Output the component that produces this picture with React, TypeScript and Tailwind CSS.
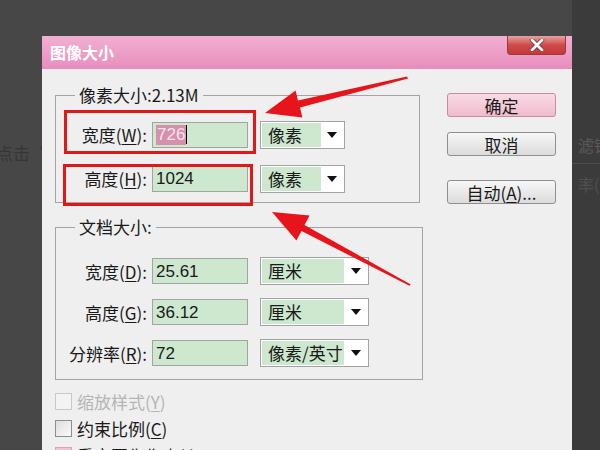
import React from "react";

const CJK = { fontFamily: '"Noto Sans CJK SC", "Noto Sans", sans-serif' };
const LAT = { fontFamily: '"Liberation Sans", "Noto Sans CJK SC", sans-serif' };

function Label({ pre, key1, post = "):" }: { pre: string; key1: string; post?: string }) {
  return (
    <div className="w-[91px] text-right text-[17px] text-[#1a1a1a] leading-none whitespace-nowrap" style={CJK}>
      {pre}(<span className="underline underline-offset-2">{key1}</span>{post}
    </div>
  );
}

function Field({ value, selected }: { value: string; selected?: boolean }) {
  return (
    <div className="ml-[5px] w-[96px] h-[26px] bg-[#cde8cf] border border-[#9fa59f] flex items-center pl-[3px]">
      {selected ? (
        <>
          <span className="text-[17px] leading-[20px] bg-[#d690ac] text-[#f7e4ec] px-[1px]" style={LAT}>
            {value}
          </span>
          <span className="w-[1px] h-[19px] bg-black" />
        </>
      ) : (
        <span className="text-[17px] leading-none text-[#1a1a1a]" style={LAT}>
          {value}
        </span>
      )}
    </div>
  );
}

function Select({ text, w, gw }: { text: string; w: number; gw: number }) {
  return (
    <div
      className="ml-[12px] h-[28px] bg-white border border-[#a3a3a3] flex items-stretch p-[1px]"
      style={{ width: w }}
    >
      <div
        className="bg-[#cde8cf] flex items-center pl-[6px] text-[17px] text-[#1a1a1a] whitespace-nowrap overflow-hidden"
        style={{ width: gw, ...CJK }}
      >
        {text}
      </div>
      <div className="flex-1 flex items-center justify-center">
        <svg width="10" height="6" viewBox="0 0 10 6">
          <polygon points="0,0 10,0 5,6" fill="#111" />
        </svg>
      </div>
    </div>
  );
}

function Button({ children, primary }: { children: React.ReactNode; primary?: boolean }) {
  return (
    <div
      className={
        "w-[109px] h-[24px] rounded-[3px] border flex items-center justify-center text-[17px] leading-none text-[#1a1a1a] " +
        (primary
          ? "border-[#c98aa2] bg-gradient-to-b from-[#f9dbe5] to-[#efbccd]"
          : "border-[#8f8f8f] bg-gradient-to-b from-[#f7f7f7] to-[#dcdcdc]")
      }
      style={CJK}
    >
      {children}
    </div>
  );
}

function Check({ label, k, disabled, pink }: { label: string; k: string; disabled?: boolean; pink?: boolean }) {
  return (
    <div className="flex items-center h-[17px]">
      <div
        className={
          "w-[17px] h-[17px] shrink-0 border " +
          (disabled
            ? "border-[#c9c9c9] bg-[#f3f3f3]"
            : pink
            ? "border-[#d7a3b7] bg-[#eec3d2]"
            : "border-[#8e8e8e] bg-gradient-to-br from-[#dedede] to-[#fafafa]")
        }
      />
      <div
        className={"ml-[5px] text-[17px] leading-none whitespace-nowrap " + (disabled ? "text-[#b5b5b5]" : "text-[#1a1a1a]")}
        style={CJK}
      >
        {label}(<span className="underline underline-offset-2">{k}</span>)
      </div>
    </div>
  );
}

export default function App() {
  return (
    <div className="relative w-[600px] h-[450px] overflow-hidden bg-[#474747] flex">
      {/* left background strip */}
      <div className="w-[42px] shrink-0 pt-[140px] overflow-hidden whitespace-nowrap">
        <div className="ml-[-4px] text-[17px] text-[#363636]" style={CJK}>
          点击“扩
        </div>
      </div>

      {/* dialog */}
      <div className="w-[530px] shrink-0 pt-[36px] flex flex-col">
        <div className="h-[33px] shrink-0 bg-gradient-to-b from-[#f2b0d1] to-[#e88dbd] flex justify-between items-start pl-[8px] pr-[6px]">
          <div className="leading-[33px] text-[16px] font-bold text-white" style={CJK}>
            图像大小
          </div>
          <div className="w-[59px] h-[19px] rounded-b-[4px] border border-t-0 border-[#9a3a3a] bg-gradient-to-b from-[#e9a0a0] via-[#cf4a4a] to-[#c23a3a] flex items-center justify-center">
            <svg width="16" height="12" viewBox="0 0 16 12">
              <path d="M3 1 L13 11 M13 1 L3 11" stroke="#7a3a3a" strokeWidth="4.5" strokeLinecap="round" />
              <path d="M3 1 L13 11 M13 1 L3 11" stroke="#ffffff" strokeWidth="2.8" strokeLinecap="round" />
            </svg>
          </div>
        </div>

        <div className="flex-1 bg-[#efefef] flex pl-[13px]">
          {/* left column */}
          <div className="w-[368px] shrink-0 flex flex-col">
            <fieldset className="mt-[16px] w-[365px] h-[118px] border border-[#a3a3a3]">
              <legend className="ml-[19px] px-[4px] text-[17px] leading-[20px] text-[#1a1a1a]" style={CJK}>
                像素大小:2.13M
              </legend>
              <div className="mt-[16px] flex items-center h-[27px]">
                <Label pre="宽度" key1="W" />
                <Field value="726" selected />
                <Select text="像素" w={85} gw={59} />
              </div>
              <div className="mt-[17px] flex items-center h-[27px]">
                <Label pre="高度" key1="H" />
                <Field value="1024" />
                <Select text="像素" w={85} gw={59} />
              </div>
            </fieldset>

            <fieldset className="mt-[14px] w-[368px] h-[163px] border border-[#a3a3a3]">
              <legend className="ml-[19px] px-[4px] text-[17px] leading-[20px] text-[#1a1a1a]" style={CJK}>
                文档大小:
              </legend>
              <div className="mt-[20px] flex flex-col gap-[13px]">
                <div className="flex items-center h-[28px]">
                  <Label pre="宽度" key1="D" />
                  <Field value="25.61" />
                  <Select text="厘米" w={109} gw={82} />
                </div>
                <div className="flex items-center h-[28px]">
                  <Label pre="高度" key1="G" />
                  <Field value="36.12" />
                  <Select text="厘米" w={109} gw={82} />
                </div>
                <div className="flex items-center h-[28px]">
                  <Label pre="分辨率" key1="R" />
                  <Field value="72" />
                  <Select text="像素/英寸" w={109} gw={82} />
                </div>
              </div>
            </fieldset>

            <div className="mt-[13px] flex flex-col gap-[10px]">
              <Check label="缩放样式" k="Y" disabled />
              <Check label="约束比例" k="C" />
              <Check label="重定图像像素" k="I" pink />
            </div>
          </div>

          {/* right column */}
          <div className="ml-[24px] flex flex-col pt-[24px]">
            <Button primary>确定</Button>
            <div className="mt-[15px]">
              <Button>取消</Button>
            </div>
            <div className="mt-[24px]">
              <Button>
                自动(<span className="underline underline-offset-2">A</span>)...
              </Button>
            </div>
          </div>
        </div>
      </div>

      {/* right background strip */}
      <div className="w-[28px] shrink-0 bg-[#3b3b3b] flex flex-col overflow-hidden whitespace-nowrap">
        <div className="mt-[133px] ml-[6px] text-[16px] text-[#5a5a5a]" style={CJK}>
          滤镜
        </div>
        <div className="mt-[6px] h-[1px] bg-[#4c4c4c]" />
        <div className="mt-[8px] ml-[6px] text-[16px] text-[#505050]" style={CJK}>
          率(
        </div>
      </div>

      {/* annotation overlay: red boxes and arrows */}
      <svg className="absolute inset-0 pointer-events-none" width="600" height="450" viewBox="0 0 600 450">
        <rect x="65.5" y="111.5" width="189" height="41" fill="none" stroke="#e01818" strokeWidth="3" />
        <rect x="64.5" y="165.5" width="187" height="39" fill="none" stroke="#e01818" strokeWidth="3" />
        <polygon
          points="407,76.5 298,100.5 295.6,90.4 265,113 302.4,117.6 300,107.5 408,78.5"
          fill="#e8141c"
        />
        <polygon
          points="410.8,284.4 304.5,225 309.6,215.6 272,212 296.4,240.4 301.5,231 409.4,285.8"
          fill="#e8141c"
        />
      </svg>
    </div>
  );
}
